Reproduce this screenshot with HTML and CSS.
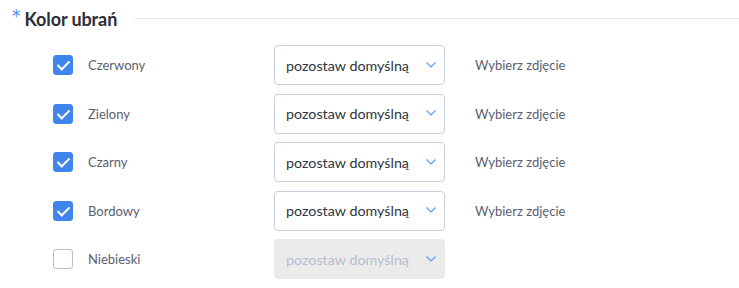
FILE: index.html
```html
<!DOCTYPE html>
<html lang="pl">
<head>
    <meta charset="UTF-8">
    <meta name="viewport" content="width=device-width, initial-scale=1.0">
    <title>Kolor ubrań</title>
    <link rel="stylesheet" href="styles.css">
</head>
<body>
    <div class="section">
        <div class="section-head">
            <span class="required">*</span>
            <h2>Kolor ubrań</h2>
            <span class="divider"></span>
        </div>

        <div class="rows">
            <div class="row">
                <span class="check checked"></span>
                <span class="label">Czerwony</span>
                <div class="select"><span>pozostaw domyślną</span><svg class="chevron" viewBox="0 0 10 6"><polyline points="0.5,0.5 5,5 9.5,0.5"/></svg></div>
                <a class="pick">Wybierz zdjęcie</a>
            </div>
            <div class="row">
                <span class="check checked"></span>
                <span class="label">Zielony</span>
                <div class="select"><span>pozostaw domyślną</span><svg class="chevron" viewBox="0 0 10 6"><polyline points="0.5,0.5 5,5 9.5,0.5"/></svg></div>
                <a class="pick">Wybierz zdjęcie</a>
            </div>
            <div class="row">
                <span class="check checked"></span>
                <span class="label">Czarny</span>
                <div class="select"><span>pozostaw domyślną</span><svg class="chevron" viewBox="0 0 10 6"><polyline points="0.5,0.5 5,5 9.5,0.5"/></svg></div>
                <a class="pick">Wybierz zdjęcie</a>
            </div>
            <div class="row">
                <span class="check checked"></span>
                <span class="label">Bordowy</span>
                <div class="select"><span>pozostaw domyślną</span><svg class="chevron" viewBox="0 0 10 6"><polyline points="0.5,0.5 5,5 9.5,0.5"/></svg></div>
                <a class="pick">Wybierz zdjęcie</a>
            </div>
            <div class="row">
                <span class="check"></span>
                <span class="label">Niebieski</span>
                <div class="select disabled"><span>pozostaw domyślną</span><svg class="chevron" viewBox="0 0 10 6"><polyline points="0.5,0.5 5,5 9.5,0.5"/></svg></div>
            </div>
            <!-- następny wiersz, widoczna tylko górna krawędź -->
            <div class="row">
                <span class="check hidden"></span>
                <span class="label"></span>
                <div class="select"></div>
            </div>
        </div>
    </div>
</body>
</html>
```

FILE: styles.css
```css
body {
    margin: 0;
    padding: 0;
    background: #fff;
    font-family: Lato, "Noto Sans", sans-serif;
    overflow: hidden;
    height: 288px;
}
.section {
    padding: 7px 0 0 12px;
}
.section-head {
    display: flex;
    align-items: center;
    height: 24px;
}
.required {
    color: #4a8cf0;
    font-family: "DejaVu Sans", sans-serif;
    font-size: 17px;
    align-self: flex-start;
    margin: 1px 4px 0 0;
    line-height: 17px;
}
.section-head h2 {
    margin: 0;
    font-size: 18px;
    font-weight: 700;
    color: #2b2f36;
    letter-spacing: -0.1px;
}
.divider {
    flex: 1;
    height: 1px;
    background: #eaeaea;
    margin-left: 16px;
    margin-top: -1px;
}
.rows {
    display: flex;
    flex-direction: column;
    gap: 8.5px;
    padding: 14px 0 0 41px;
}
.row {
    display: flex;
    align-items: center;
    height: 40px;
    flex: none;
}
.check {
    width: 18px;
    height: 18px;
    border: 1.5px solid #b8bfd3;
    border-radius: 3px;
    box-sizing: content-box;
    flex: none;
    position: relative;
}
.check.hidden {
    visibility: hidden;
}
.check.checked {
    background: #3f86ec;
    border-color: #3f86ec;
}
.check.checked::after {
    content: "";
    position: absolute;
    left: 6px;
    top: 2px;
    width: 5px;
    height: 10px;
    border: solid #fff;
    border-width: 0 2.5px 2.5px 0;
    transform: rotate(45deg);
}
.label {
    width: 186px;
    margin-left: 15px;
    font-size: 13px;
    color: #5b6070;
}
.select {
    width: 171px;
    height: 40px;
    box-sizing: border-box;
    border: 1px solid #c9cedf;
    border-radius: 4px;
    display: flex;
    align-items: center;
    justify-content: space-between;
    padding: 0 8px 0 11px;
    font-size: 14.3px;
    color: #30343c;
}
.select.disabled {
    background: #ebebeb;
    border-color: #ebebeb;
    color: #b6bdd1;
}
.chevron {
    width: 10px;
    height: 6px;
    fill: none;
    stroke: #5d9cf2;
    stroke-width: 1.2;
    margin-top: -1px;
}
.pick {
    margin-left: 30px;
    font-size: 13px;
    color: #5b6070;
    cursor: pointer;
}
```
